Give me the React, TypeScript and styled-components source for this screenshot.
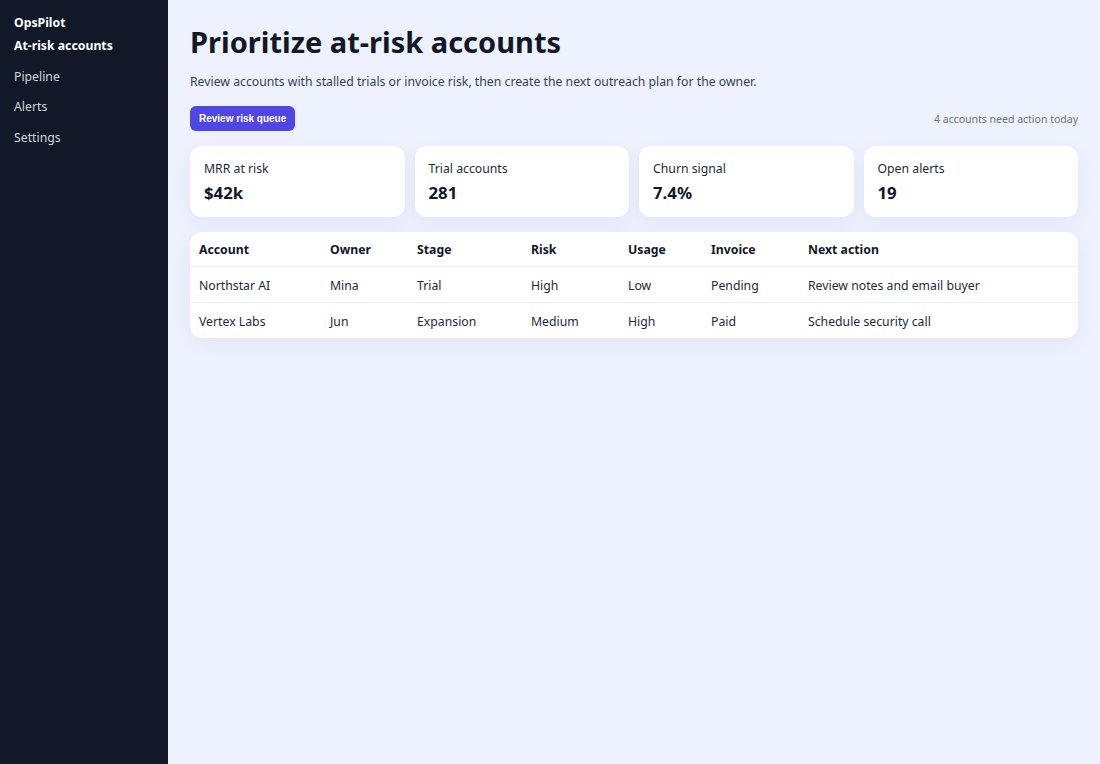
import React from 'react';
import styled, { createGlobalStyle } from 'styled-components';

const GlobalStyle = createGlobalStyle`
  * {
    box-sizing: border-box;
  }
  html,
  body {
    margin: 0;
    padding: 0;
    height: 100%;
  }
  body {
    font-family: 'Noto Sans', 'Open Sans', sans-serif;
    font-size: 12.25px;
    background: #eef2ff;
    color: #111827;
  }
  #root {
    min-height: 100%;
  }
`;

const metrics = [
  { label: 'MRR at risk', value: '$42k' },
  { label: 'Trial accounts', value: '281' },
  { label: 'Churn signal', value: '7.4%' },
  { label: 'Open alerts', value: '19' },
];

const columns = [
  { title: 'Account', width: 131 },
  { title: 'Owner', width: 87 },
  { title: 'Stage', width: 114 },
  { title: 'Risk', width: 97 },
  { title: 'Usage', width: 83 },
  { title: 'Invoice', width: 97 },
  { title: 'Next action' },
];

const accounts = [
  ['Northstar AI', 'Mina', 'Trial', 'High', 'Low', 'Pending', 'Review notes and email buyer'],
  ['Vertex Labs', 'Jun', 'Expansion', 'Medium', 'High', 'Paid', 'Schedule security call'],
];

const navItems = ['At-risk accounts', 'Pipeline', 'Alerts', 'Settings'];

const App = () => {
  return (
    <>
      <GlobalStyle />
      <Layout>
        <Sidebar>
          <Brand>OpsPilot</Brand>
          <Nav>
            {navItems.map((item, i) => (
              <NavItem key={item} $active={i === 0}>
                {item}
              </NavItem>
            ))}
          </Nav>
        </Sidebar>
        <Main>
          <Header>
            <Title>Prioritize at-risk accounts</Title>
            <Intro>
              Review accounts with stalled trials or invoice risk, then create
              the next outreach plan for the owner.
            </Intro>
          </Header>
          <Toolbar>
            <PrimaryButton type="button">Review risk queue</PrimaryButton>
            <Hint>4 accounts need action today</Hint>
          </Toolbar>
          <MetricGrid>
            {metrics.map((m) => (
              <MetricCard key={m.label}>
                <MetricLabel>{m.label}</MetricLabel>
                <MetricValue>{m.value}</MetricValue>
              </MetricCard>
            ))}
          </MetricGrid>
          <TableCard>
            <Table>
              <colgroup>
                {columns.map((c) => (
                  <col key={c.title} style={c.width ? { width: c.width } : undefined} />
                ))}
              </colgroup>
              <thead>
                <tr>
                  {columns.map((c) => (
                    <HeadCell key={c.title}>{c.title}</HeadCell>
                  ))}
                </tr>
              </thead>
              <tbody>
                {accounts.map((row) => (
                  <tr key={row[0]}>
                    {row.map((cell, i) => (
                      <Cell key={i}>{cell}</Cell>
                    ))}
                  </tr>
                ))}
              </tbody>
            </Table>
          </TableCard>
        </Main>
      </Layout>
    </>
  );
};

const Layout = styled.div`
  display: flex;
  min-height: 100vh;
`;

const Sidebar = styled.aside`
  width: 168px;
  flex-shrink: 0;
  display: flex;
  flex-direction: column;
  padding: 13px 14px;
  background: #111827;
`;

const Brand = styled.div`
  font-size: 12.25px;
  font-weight: 700;
  line-height: 20px;
  color: #ffffff;
`;

const Nav = styled.nav`
  display: flex;
  flex-direction: column;
  gap: 11px;
  margin-top: 3px;
`;

const NavItem = styled.a<{ $active?: boolean }>`
  font-size: 12.25px;
  line-height: 19.5px;
  font-weight: ${(p) => (p.$active ? 700 : 400)};
  color: ${(p) => (p.$active ? '#ffffff' : '#d1d5db')};
  text-decoration: none;
  cursor: pointer;
`;

const Main = styled.main`
  flex: 1;
  display: flex;
  flex-direction: column;
  gap: 15px;
  padding: 24px 22px;
`;

const Header = styled.header`
  display: flex;
  flex-direction: column;
  gap: 12px;
`;

const Title = styled.h1`
  margin: 0;
  font-size: 29px;
  line-height: 36px;
  font-weight: 700;
  color: #111827;
`;

const Intro = styled.p`
  margin: 0;
  font-size: 12.25px;
  line-height: 19px;
  color: #374151;
`;

const Toolbar = styled.div`
  display: flex;
  align-items: center;
  justify-content: space-between;
`;

const PrimaryButton = styled.button`
  height: 25px;
  padding: 0 9px;
  border: none;
  border-radius: 6px;
  background: #4f46e5;
  color: #ffffff;
  font-family: 'Liberation Sans', Arial, sans-serif;
  font-size: 10px;
  font-weight: 700;
  cursor: pointer;
`;

const Hint = styled.span`
  font-size: 10.5px;
  color: #6b7280;
`;

const MetricGrid = styled.section`
  display: grid;
  grid-template-columns: repeat(4, 1fr);
  gap: 10px;
`;

const MetricCard = styled.div`
  display: flex;
  flex-direction: column;
  gap: 4px;
  padding: 13px 14px;
  background: #ffffff;
  border-radius: 12px;
  box-shadow: 0 6px 20px rgba(30, 41, 82, 0.06);
`;

const MetricLabel = styled.span`
  font-size: 12.25px;
  line-height: 19px;
  color: #1f2937;
`;

const MetricValue = styled.strong`
  font-size: 16.8px;
  line-height: 22px;
  font-weight: 700;
  color: #111827;
`;

const TableCard = styled.section`
  background: #ffffff;
  border-radius: 12px;
  overflow: hidden;
  box-shadow: 0 6px 20px rgba(30, 41, 82, 0.06);
`;

const Table = styled.table`
  width: 100%;
  border-collapse: collapse;
  table-layout: fixed;
  font-size: 12.25px;
`;

const HeadCell = styled.th`
  padding: 9px 9px 7px;
  line-height: 18px;
  text-align: left;
  font-weight: 700;
  color: #111827;
  border-bottom: 1px solid #eceff5;
`;

const Cell = styled.td`
  padding: 9px 9px 7px;
  line-height: 19px;
  color: #1f2937;

  tr:not(:last-child) > & {
    border-bottom: 1px solid #eceff5;
  }
`;

export default App;
